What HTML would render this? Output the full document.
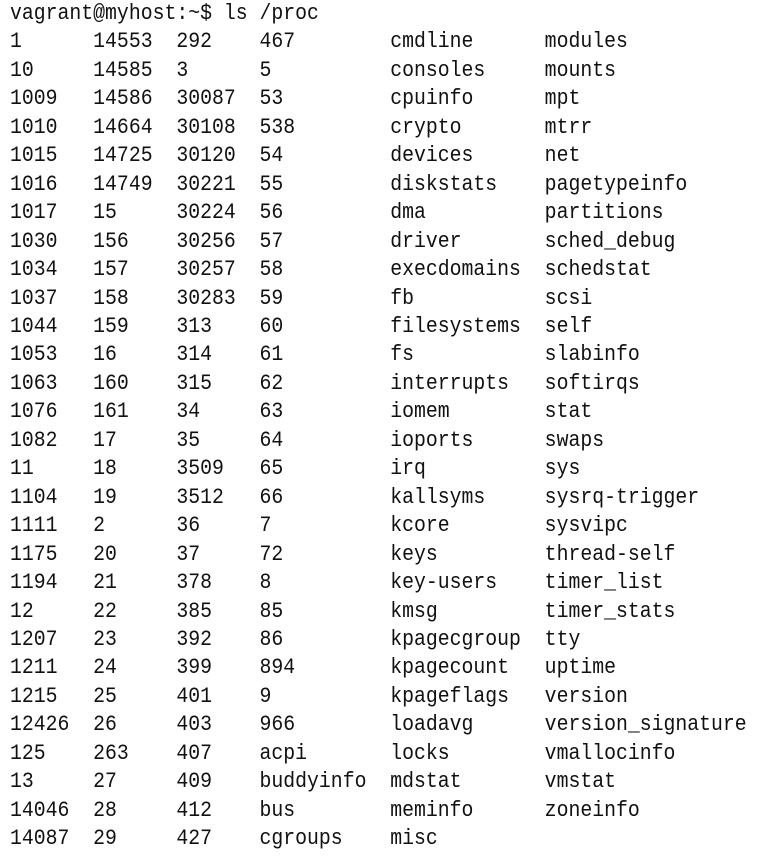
<!DOCTYPE html>
<html><head><meta charset="utf-8"><style>
html,body{margin:0;padding:0;background:#fff;width:761px;height:867px;overflow:hidden}
pre{position:absolute;left:10px;top:0;margin:0;font-family:"Liberation Mono",monospace;font-size:22px;line-height:28.45px;color:#111;transform:scaleX(0.9);transform-origin:0 0;}
</style></head><body><pre>vagrant@myhost:~$ ls /proc
1      14553  292    467        cmdline      modules
10     14585  3      5          consoles     mounts
1009   14586  30087  53         cpuinfo      mpt
1010   14664  30108  538        crypto       mtrr
1015   14725  30120  54         devices      net
1016   14749  30221  55         diskstats    pagetypeinfo
1017   15     30224  56         dma          partitions
1030   156    30256  57         driver       sched_debug
1034   157    30257  58         execdomains  schedstat
1037   158    30283  59         fb           scsi
1044   159    313    60         filesystems  self
1053   16     314    61         fs           slabinfo
1063   160    315    62         interrupts   softirqs
1076   161    34     63         iomem        stat
1082   17     35     64         ioports      swaps
11     18     3509   65         irq          sys
1104   19     3512   66         kallsyms     sysrq-trigger
1111   2      36     7          kcore        sysvipc
1175   20     37     72         keys         thread-self
1194   21     378    8          key-users    timer_list
12     22     385    85         kmsg         timer_stats
1207   23     392    86         kpagecgroup  tty
1211   24     399    894        kpagecount   uptime
1215   25     401    9          kpageflags   version
12426  26     403    966        loadavg      version_signature
125    263    407    acpi       locks        vmallocinfo
13     27     409    buddyinfo  mdstat       vmstat
14046  28     412    bus        meminfo      zoneinfo
14087  29     427    cgroups    misc</pre></body></html>
